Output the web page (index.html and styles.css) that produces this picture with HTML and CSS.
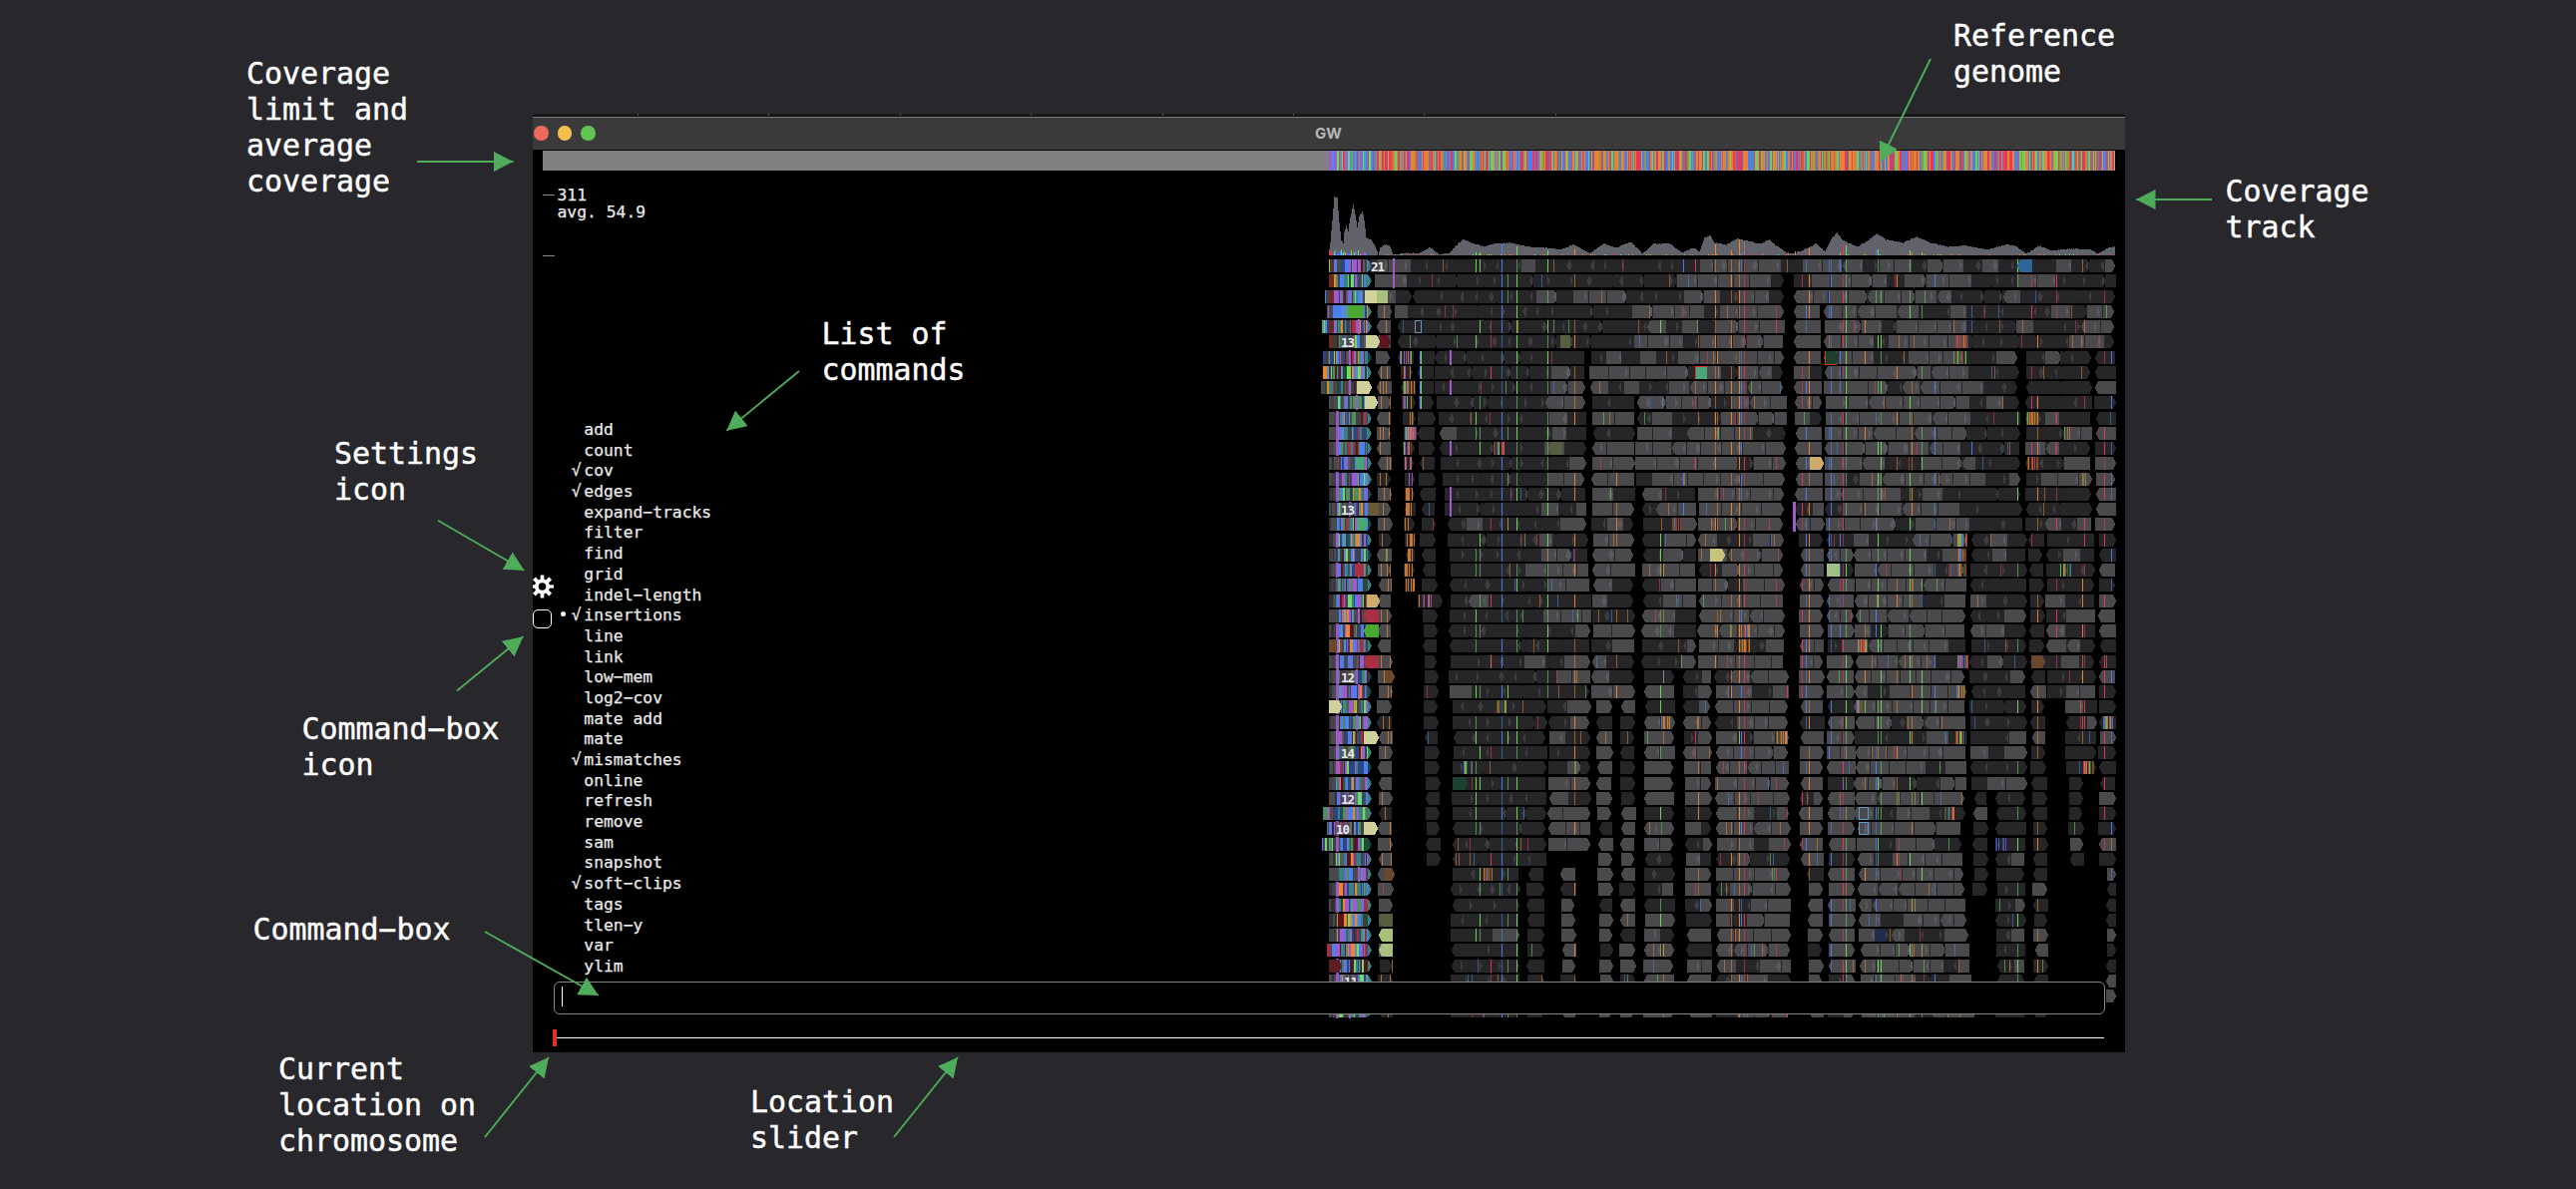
FILE: index.html
```html
<!DOCTYPE html>
<html lang="en">
<head>
<meta charset="utf-8">
<title>GW</title>
<link rel="stylesheet" href="styles.css">
</head>
<body>
<main class="stage">
  <section class="window">
    <div class="window-edge"><i></i><i></i><i></i><i></i><i></i><i></i><i></i><i></i></div>
    <header class="titlebar">
      <div class="lights"><span class="light close"></span><span class="light minimise"></span><span class="light zoom"></span></div>
      <h1 class="title">GW</h1>
    </header>
    <div class="viewport">
      <svg class="tracks" id="tracks" viewBox="1320 150 810 905" width="810" height="905"></svg>
      <div class="reference-pad"></div>
      <div class="limits">
        <div class="limit">311</div>
        <div class="limit">avg. 54.9</div>
      </div>
      <div class="middle">
        <div class="tools">
          <svg class="gear" viewBox="-9.5 -12 22 24" width="22" height="24">
            <g fill="#fff">
              <rect x="-1.8" y="-11.5" width="3.6" height="23"/>
              <rect x="-11.5" y="-1.6" width="23" height="3.2"/>
              <rect x="-2" y="-11.5" width="4" height="23" transform="rotate(45)"/>
              <rect x="-2" y="-11.5" width="4" height="23" transform="rotate(-45)"/>
              <circle r="7.6"/>
            </g>
            <circle r="3.8" fill="#000"/>
          </svg>
          <div class="box-icon"></div>
        </div>
        <ul class="commands">
          <li>add</li><li>count</li><li class="on">cov</li><li class="on">edges</li><li>expand−tracks</li>
          <li>filter</li><li>find</li><li>grid</li><li>indel−length</li><li class="on current">insertions</li>
          <li>line</li><li>link</li><li>low−mem</li><li>log2−cov</li><li>mate add</li><li>mate</li>
          <li class="on">mismatches</li><li>online</li><li>refresh</li><li>remove</li><li>sam</li><li>snapshot</li>
          <li class="on">soft−clips</li><li>tags</li><li>tlen−y</li><li>var</li><li>ylim</li>
        </ul>
      </div>
      <div class="command-box"><span class="caret"></span></div>
      <div class="slider"><span class="marker"></span><span class="rail"></span></div>
    </div>
  </section>

  <p class="note n-limit">Coverage<br>limit and<br>average<br>coverage</p>
  <p class="note n-genome">Reference<br>genome</p>
  <p class="note n-track">Coverage<br>track</p>
  <p class="note n-list">List of<br>commands</p>
  <p class="note n-settings">Settings<br>icon</p>
  <p class="note n-boxicon">Command−box<br>icon</p>
  <p class="note n-box">Command−box</p>
  <p class="note n-current">Current<br>location on<br>chromosome</p>
  <p class="note n-slider">Location<br>slider</p>

  <svg class="arrows" viewBox="0 0 2582 1192" width="2582" height="1192">
    <defs>
      <marker id="head" viewBox="0 0 19.5 20" refX="19.5" refY="10" markerWidth="19.5" markerHeight="20" markerUnits="userSpaceOnUse" orient="auto"><path d="M0 0L19.5 10L0 20Z" fill="#4fac5b"/></marker>
    </defs>
    <g stroke="#4fac5b" stroke-width="1.9">
      <path d="M418 162H514.5" marker-end="url(#head)"/>
      <path d="M1935 59L1884.3 162.5" marker-end="url(#head)"/>
      <path d="M2217 200H2141" marker-end="url(#head)"/>
      <path d="M801 372L728.3 431.7" marker-end="url(#head)"/>
      <path d="M439 521.7L525.5 572" marker-end="url(#head)"/>
      <path d="M458 692.5L524.3 638.3" marker-end="url(#head)"/>
      <path d="M486 934L600 998" marker-end="url(#head)"/>
      <path d="M486 1140L550 1060" marker-end="url(#head)"/>
      <path d="M896 1140L960 1060" marker-end="url(#head)"/>
    </g>
  </svg>
</main>
<script src="tracks.js"></script>
</body>
</html>
```
FILE: styles.css
```css
* { box-sizing: border-box; margin: 0; padding: 0; }
body { background: #28272c; overflow: hidden; }
.stage { position: relative; width: 2582px; height: 1192px; font-family: "DejaVu Sans Mono", monospace; color: #fff; }

.window { position: absolute; left: 534px; top: 114px; width: 1596px; height: 941px; display: flex; flex-direction: column; }
.window-edge { height: 3px; flex: none; background: #1b1b1e; border-bottom: 1px solid #050505; display: flex; gap: 130.4px; padding-left: 105px; }
.window-edge i { width: 1px; height: 2px; background: #555; }
.titlebar { height: 33px; flex: none; display: flex; align-items: center; background: #3a3a3a; border-top: 1px solid #808080; padding-bottom: 1px; }
.lights { display: flex; gap: 9px; padding-left: 1px; width: 784px; }
.light { width: 14.5px; height: 14.5px; border-radius: 50%; }
.close { background: #ed6a5f; }
.minimise { background: #f5bf4f; }
.zoom { background: #61c554; }
.title { font: 700 15px/18px Inter, sans-serif; color: #b6b6b6; }

.viewport { position: relative; flex: 1; background: #000; display: flex; flex-direction: column; padding-top: 1px; overflow: hidden; }
.tracks { position: absolute; left: 786px; top: 0; }
.tracks text { font: 700 12.5px "DejaVu Sans Mono", monospace; fill: #e8e8e8; }
.reference-pad { width: 788px; height: 20px; margin-left: 10px; background: #808080; flex: none; }
.limits { flex: none; margin: 16px 0 0 10px; padding-left: 14.5px; width: 150px; height: 70px; font-size: 16.35px; line-height: 17.3px; color: #ebebeb; -webkit-text-stroke: .25px #ebebeb;
  background: linear-gradient(#8a8a8a, #8a8a8a) 0 8px / 12px 1px no-repeat, linear-gradient(#8a8a8a, #8a8a8a) 0 69px / 12px 1px no-repeat; }
.middle { flex: none; display: flex; margin-top: 164px; height: 559px; width: 500px; }
.tools { width: 38px; padding-top: 155px; display: flex; flex-direction: column; gap: 11px; }
.gear { display: block; }
.box-icon { width: 19px; height: 19px; border: 1px solid #fff; border-radius: 5px; }
.commands { list-style: none; padding-left: 13.3px; font-size: 16.35px; line-height: 20.68px; color: #ebebeb; -webkit-text-stroke: .25px #ebebeb; }
.commands li { position: relative; }
.on::before { content: "√"; position: absolute; left: -12.5px; }
.current::after { content: ""; position: absolute; left: -23px; top: 6px; width: 5px; height: 5px; border-radius: 50%; background: #fff; }
.command-box { position: relative; flex: none; width: 1555px; height: 33px; margin: 4px 0 0 21px; border: 1px solid #868686; border-radius: 6px; background: #000; padding: 4px 7px; display: flex; }
.caret { width: 1px; height: 20px; background: #fff; }
.slider { position: relative; flex: none; display: flex; align-items: center; margin: 15px 0 0 20px; height: 17px; width: 1555px; }
.marker { width: 4px; height: 17px; background: #e8301f; }
.rail { flex: 1; height: 1px; background: #fff; }

.note { position: absolute; font-size: 29.9px; line-height: 36.2px; white-space: nowrap; -webkit-text-stroke: .45px #fff; }
.n-limit { left: 247px; top: 55.5px; }
.n-genome { left: 1958px; top: 18px; }
.n-track { left: 2230.5px; top: 174px; }
.n-list { left: 823.5px; top: 317px; }
.n-settings { left: 335px; top: 437px; }
.n-boxicon { left: 302.5px; top: 713px; }
.n-box { left: 253.5px; top: 914px; }
.n-current { left: 279px; top: 1054px; }
.n-slider { left: 752px; top: 1087px; }
.arrows { position: absolute; left: 0; top: 0; }
```
FILE: tracks.js
```js
let seed = 7;
const rnd = () => ((seed = (seed * 1664525 + 1013904223) >>> 0) / 4294967296);
const pick = a => a[Math.floor(rnd() * a.length)];
const G = '#6fdc5f', B = '#4a7ff2', O = '#e8852f', P = '#e8345f', V = '#a259d0', LIGHT = '#4a4a4d', DARK = '#262628';
const out = [];
const rect = (x, y, w, h, c, o) => out.push(`<rect x="${x}" y="${y}" width="${w}" height="${h}" fill="${c}"${o ? ` opacity="${o}"` : ''}/>`);
const rowY = r => Math.round(260 + 15.25 * r);

// Reference sequence
for (let x = 1332; x < 2120;) {
  const left = x < 1375, w = rnd() < .25 ? 2 : 1;
  rect(x, 151, Math.min(w, 2120 - x), 20, pick(left ? [B, B, B, '#4a9ac8', G, '#5fb080', P, '#5a8ae0', V] : ['#e8842f', '#e8842f', '#e8842f', P, P, '#e0503f', B, B, B, '#6fce5b', '#6fce5b', '#c88a38', '#a0508f', '#8a9a3e', '#5f80c0']));
  x += w;
}

// Coverage profile
const prof = [[1332,255],[1333,243],[1335,220],[1337,197],[1340,198],[1342,223],[1344,241],[1346,243],[1347,233],[1349,226],[1351,232],[1352,223],[1354,213],[1356,205],[1358,215],[1360,228],[1362,217],[1365,211],[1367,220],[1369,238],[1374,240],[1378,247],[1381,255],[1383,248],[1387,245],[1392,246],[1396,255],[1403,254],[1410,253],[1422,254],[1433,248],[1443,255],[1453,253],[1460,245],[1466,240],[1477,244],[1487,247],[1497,244],[1513,243],[1530,247],[1547,248],[1563,250],[1577,245],[1593,254],[1607,244],[1620,248],[1634,242],[1646,254],[1657,244],[1673,244],[1685,253],[1697,248],[1703,252],[1708,238],[1714,236],[1718,243],[1730,245],[1741,239],[1751,241],[1759,243],[1765,244],[1773,240],[1780,246],[1790,253],[1797,254],[1808,250],[1820,244],[1829,252],[1836,238],[1841,233],[1847,241],[1861,247],[1872,241],[1881,234],[1890,240],[1907,243],[1921,237],[1934,243],[1952,247],[1970,246],[1992,250],[2010,245],[2019,246],[2031,254],[2044,246],[2055,251],[2077,249],[2095,250],[2102,254],[2113,248],[2120,247],[2120,256],[1332,256]];
let pi = 0, area = 'M1332 256';
for (let x = 1332; x < 2120; x++) {
  while (prof[pi + 1][0] <= x) pi++;
  const [a, b] = [prof[pi], prof[pi + 1]];
  const y = a[1] + (b[1] - a[1]) * (x - a[0]) / (b[0] - a[0]);
  area += `V${(Math.round((y + (rnd() - .5) * .8) * 2) / 2)}h1`;
}
out.push(`<path d="${area}V256Z" fill="#62626b"/>`);
for (let x = 1332; x < 1370; x++) { const h = 1 + Math.floor(rnd() * (x < 1364 ? 6 : 3)); rect(x, 256 - h, 1, h, pick([B, B, G, P])); }
for (let x = 1372; x < 2120; x += 2) if (rnd() < .3) rect(x, 255, 1, 1, pick([O, G, P]));
[[1505,11,B],[1520,9,G],[1479,3,G],[1483,3,G],[1551,5,G],[1578,7,O],[1719,11,O],[1735,5,O],[1743,16,O],[1748,13,'#b06a60'],[1746,4,B],[1799,4,O],[1813,7,O],[1847,11,P],[1850,10,G],[1880,6,B],[1882,6,G],[1844,3,O],[1914,5,G],[1916,3,O],[1926,3,G]].forEach(([x, h, c]) => rect(x, 256 - h, 1, h, c));

// Stacked reads: first row, last row, then left/right edges at the first and last row
const lanes = [
  [0,1,1378,2120,1378,1787],[1,2,1798,2120],
  [2,49,1380,1394,1382,1396],[2,2,1384,1415],[2,2,1416,1788],[3,3,1382,1395],[3,3,1398,1788],[4,4,1400,1788],[5,5,1402,1788],
  [6,11,1402,1416,1407,1421],[12,21,1407,1418,1408,1419],[22,22,1420,1445],
  [6,21,1421,1437,1425,1440],[23,39,1426,1440,1430,1444],
  [6,13,1437,1587,1445,1591],[14,20,1446,1588,1454,1592],[21,28,1453,1594],
  [29,39,1456,1550],[29,38,1552,1594],[40,49,1455,1523],[40,49,1531,1548],[40,49,1565,1579],
  [6,8,1594,1788],[9,28,1596,1638],[9,14,1640,1790],[15,26,1646,1700],[15,26,1702,1788],
  [29,49,1600,1616,1604,1617],[29,49,1624,1639],[27,49,1648,1678],[27,49,1687,1715,1691,1716],[27,49,1719,1793,1721,1795],
  [3,17,1798,1825,1800,1828],[3,17,1828,2021,1830,2027],[3,5,2021,2120],[6,17,2030,2096],[6,17,2100,2121],
  [18,39,1804,1828],[40,49,1812,1827],[18,49,1831,1858,1833,1860],[18,36,1859,1970],[37,49,1861,1965,1866,1978],
  [18,34,1975,2031],[35,41,1978,1992],[35,49,2001,2030],[18,49,2033,2048,2040,2054],
  [18,28,2051,2100],[29,33,2070,2101],[34,39,2074,2088],[18,39,2104,2121],[40,48,2111,2121]];
const lightness = (x, r) => x < 1400 ? .85 : x < 1545 ? .04 : x < 1600 ? (r < 6 ? .3 : .7) : x < 1700 ? (r < 3 ? .35 : .62) : x < 1800 ? .82 : x < 1860 ? .85 : x < 1965 ? (r < 2 ? .5 : .82) : x < 2100 ? .25 : .5;
const lines = [[1479,G,.4],[1483,G,.35],[1494,P,.15],[1505,B,.95],[1511,G,.3],[1520,G,.8],[1551,G,.65],[1578,O,.65],[1620,O,.2],[1664,G,.2],[1667,O,.25],[1687,B,.12],[1699,P,.2],[1702,O,.25],[1719,O,.75],[1721,O,.3],[1735,O,.55],[1743,O,.85],[1745,B,.3],[1748,P,.8],[1780,P,.2],[1791,P,.3],[1799,O,.3],[1806,P,.5],[1810,B,.6],[1813,O,.7],[1833,B,.4],[1835,B,.35],[1844,B,.15],[1847,P,.75],[1850,G,.8],[1869,O,.2],[1880,B,.3],[1882,G,.35],[1885,G,.4],[1901,O,.25],[1914,G,.35],[1916,O,.35],[1926,G,.3],[1939,B,.25],[1976,B,.3],[2022,G,.3],[2036,P,.2],[2042,O,.55],[2061,P,.35],[2087,O,.35],[2089,P,.3],[2109,P,.5],[2116,B,.2]];
function read(x, y, w, c, dir) {
  const l = dir < 0 ? 3 : 0, q = dir > 0 ? 3 : 0;
  out.push(`<path d="M${x + l} ${y}H${x + w - q}l${q} 6.5l${-q} 6.5H${x + l}l${-l} -6.5Z" fill="${c}"/>`);
}
lanes.forEach(([r0, r1, a0, b0, a1 = a0, b1 = b0]) => {
  for (let r = r0; r <= r1; r++) {
    const t = r1 > r0 ? (r - r0) / (r1 - r0) : 0, y = rowY(r);
    const xa = Math.round(a0 + (a1 - a0) * t + (r0 === 0 ? 0 : rnd() * 2 - 1)), xb = Math.min(2121, Math.round(b0 + (b1 - b0) * t + rnd() * 2 - 1));
    let x = xa;
    while (x < xb - 4) {
      let w = 14 + Math.floor(rnd() * 10);
      if (xb - x - w < 9) w = xb - x;
      const light = rnd() < lightness(x, r), c = light ? LIGHT : DARK;
      const first = x === xa, last = x + w >= xb, p = rnd();
      if (!first) rect(x - 1, y, 3, 13, DARK);
      read(x, y, w, c, first && p < .5 ? -1 : last && p > .4 ? 1 : !first && !last ? (p < .15 ? -1 : p > .85 ? 1 : 0) : 0);
      if (w > 12 && !last && rnd() < .75) {
        const m = x + w - 4 - Math.floor(rnd() * 4), s = Math.floor(rnd() * 3);
        out.push(`<path d="M${m} ${y + 6.5}l${s ? 3 : 0} -5l${s === 1 ? 0 : 3} 5l${s === 1 ? 0 : -3} 5z" fill="${light ? '#5a5a5f' : '#3d3d40'}"/>`);
      }
      if (!last && rnd() < .25) rect(x + w - 1, y, 1, 13, '#0c0c0d');
      x += w;
    }
    lines.forEach(([lx, c, p]) => { if (lx > xa + 1 && lx < xb - 1 && rnd() < p) rect(lx, y, 1, 13, c, rnd() < .5 ? .95 : .6); });
    for (let k = xa + 3; k < xb - 2; k++) if (rnd() < .012) rect(k, y, 1, 13, pick([O, G, P, B, O]), .55);
    if (xa < 1390 && xb < 1400) for (let k = 0; k < 4; k++) if (rnd() < .35) rect(xa + 3 + k * 3, y, 1, 13, O, .75);
    if (r0 === 12 || (r0 === 6 && xa < 1412) || r0 === 22) for (let k = xa + 1; k < Math.min(xb - 1, xa + 14); k += 1) if (rnd() < .5) rect(k, y, 1, 13, r > 14 && r < 22 ? O : pick([O, G, V, '#6f4a30']), .85);
  }
});

// Soft-clipped reads at the left end
const clip = [B, B, B, '#2a4580', '#2a4580', V, V, G, '#4f8f5a', '#3a8080', '#3a8080', '#59595e', LIGHT, LIGHT, '#404044', '#57151f', '#a82f42', '#234a35', '#5f8fb8', O];
const jut = {2:-4,3:-2,4:-7,6:-6,7:-6,8:-8,36:-6,37:-2,38:-7,45:-2};
for (let r = 0; r < 50; r++) {
  const y = rowY(r), x0 = 1332 + (jut[r] || 0);
  rect(x0, y, 1371 - x0, 13, LIGHT);
  let x = x0;
  while (x < 1371) { const w = rnd() < .12 ? 4 : 1 + Math.floor(rnd() * 2); rect(x, y, Math.min(w, 1371 - x), 13, !jut[r] && x < 1339 && r > 8 ? pick([LIGHT, LIGHT, '#404044', '#303033']) : pick(clip)); x += w; }
  out.push(`<path d="M1371 ${y}l4 6.5l-4 6.5z" fill="${pick(['#3a8080', '#1d4545', '#3a8080'])}"/>`);
  if (r > 8 && rnd() < .5) rect(1339, y - 1, 3, 15, V, .85);
  if (rnd() < .35) rect(pick([1352, 1359, 1361]), y - 1, 2, 15, V);
}
for (let r = 0; r < 6; r++) if (r !== 3) rect(1332, rowY(r), 5, 13, '#6a2a24');
rect(1332, 260, 1, 13, G); rect(1396, 259, 2, 15, V); rect(1396, 274, 2, 15, V);

// Individually coloured reads: row, x, width, fill, direction
[[2,1368,12,'#d2d29c',0],[2,1380,11,'#a9bf7d',0],[5,1369,14,'#d0d09a',1],[5,1383,11,'#5a1520',1],[3,1351,16,'#4aa832',0],[0,2022,15,'#2f6496',-1],[5,1564,10,'#566040',0],
 [6,1829,14,'#1d3f2c',1],[7,1700,11,'#4aa678',0],[13,1814,14,'#cdab68',1],[8,1360,15,'#d0d09a',1],[9,1368,13,'#d0d09a',1],[12,1552,14,'#566040',-1],[19,1714,15,'#c6c47c',1],
 [20,1831,13,'#9fbf86',0],[13,1359,8,'#4aa678',0],[16,1371,11,'#6a5a35',0],[17,1360,11,'#4aa678',1],[22,1370,13,'#cdab68',1],[20,1358,9,'#a92f42',0],[23,1367,15,'#a92f42',-1],[24,1367,15,'#4aa832',-1],[26,1367,15,'#a92f42',-1],
 [31,1367,15,'#d0d09a',1],[37,1367,14,'#d0d09a',1],[29,1332,13,'#d0d09a',1],[34,1456,15,'#1d4030',1],[26,2036,14,'#6a482b',1],[43,1382,14,'#566040',-1],[44,1382,14,'#a9bf7d',-1],[45,1382,14,'#a9bf7d',-1],[44,1879,11,'#222c4c',0],[46,1332,13,'#5a1f22',1],
 [25,1332,8,'#6a482b',0],[27,1388,10,'#6a482b',1],[40,1388,10,'#6a482b',1]].forEach(([r, x, w, c, d]) => read(x, rowY(r), w, c, d));

// Dense mismatch clusters
[[5,1960],[6,1960],[10,2031],[13,2032],[18,1961],[19,1960],[20,1960],[25,1860],[26,1962],[28,1961],[29,1859],[31,1960],[36,1948],[25,1743],[17,1674],[12,1497],[40,1485],[31,1780],[30,1665],[20,2065],[29,1499],[38,2000],[33,1466],[30,2107],[24,1743],[33,2088]].forEach(([r, x]) => {
  for (let k = 0; k < 11; k++) if (rnd() < .65) rect(x + k, rowY(r), 1, 13, r === 38 ? pick([B, '#5a60d0', '#3f4f90']) : pick([O, O, '#8a5020', '#8a5020', P, G, '#406a30', B]), .8);
});
for (const r of [6, 8, 12, 15, 16]) rect(1453, rowY(r) - 1, 2, 15, V);
rect(1797, rowY(16) - 1, 3, 15, V); rect(1797, rowY(17) - 1, 3, 15, V);
for (const r of [6,7,8,9]) { rect(1423, rowY(r), 2, 13, B); rect(1424, rowY(r), 1, 13, G); }
out.push(`<path d="M1863.5 ${rowY(36)}h9v12h-9zM1863.5 ${rowY(37)}h9v12h-9zM1418 ${rowY(4)}h6v12h-6z" fill="none" stroke="#5f9cc0"/>`);
out.push(`<path d="M1829 ${rowY(6)}v13h12M1699.500 ${rowY(7) + 13}v-13h11" fill="none" stroke="#e03020"/>`);

[[0,1374,21],[5,1344,13],[16,1344,13],[27,1344,12],[32,1344,14],[35,1344,12],[37,1339,10],[47,1347,11]].forEach(([r, x, s]) => {
  rect(x - 1, rowY(r), 15, 13, LIGHT, .6);
  out.push(`<text x="${x}" y="${rowY(r) + 11.5}" textLength="14">${s}</text>`);
});
const svg = document.getElementById('tracks');
svg.setAttribute('shape-rendering', 'crispEdges');
svg.innerHTML = out.join('');
```
